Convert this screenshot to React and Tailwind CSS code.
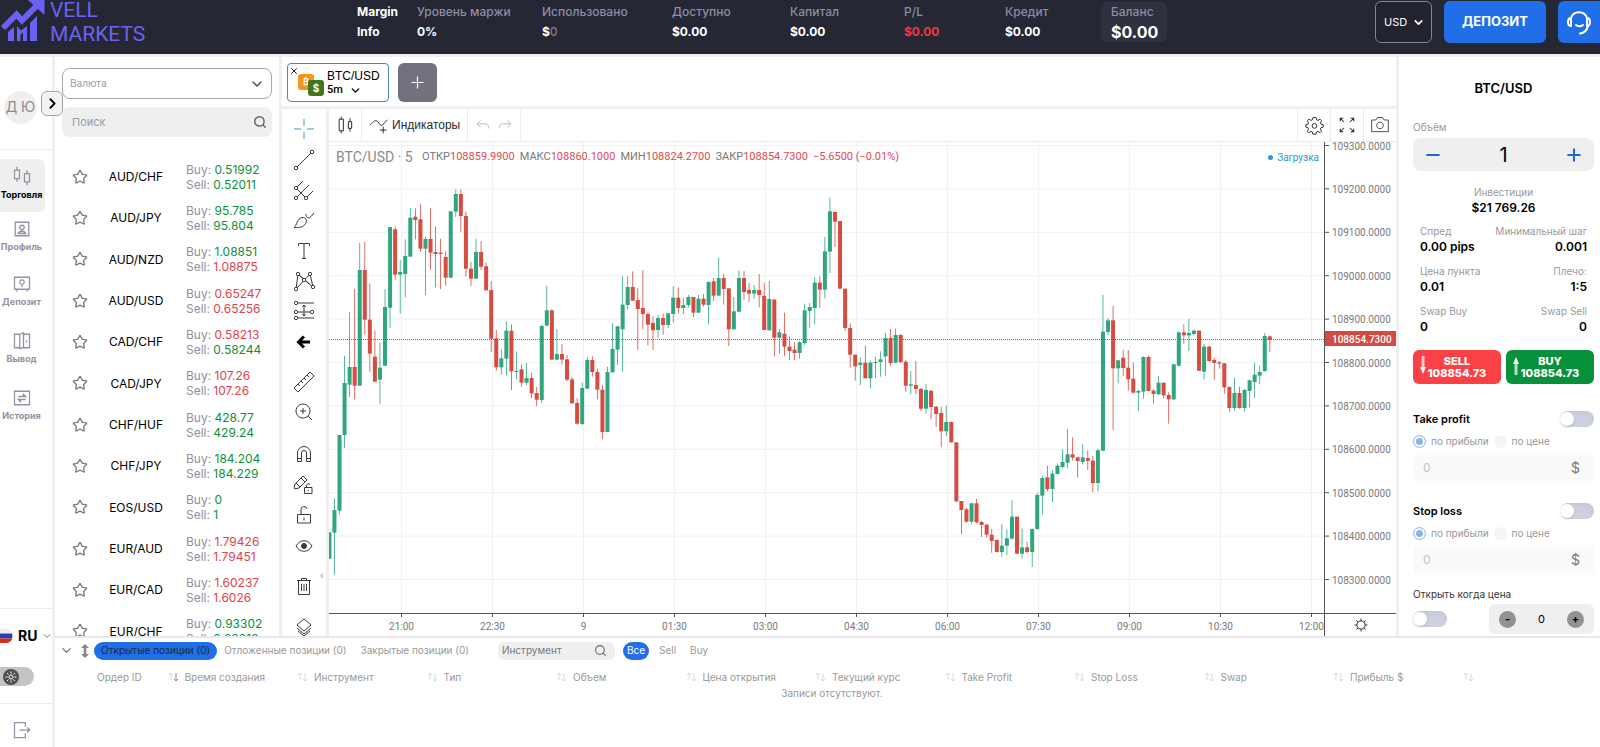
import React, { useState } from 'react';
import { ChevronDown, ChevronRight, Search, Star, Minus, Plus, X } from 'lucide-react';

const accountStats = [
  { label: 'Уровень маржи', value: '0%', width: 'w-[125px]' },
  { label: 'Использовано', value: '$', dim: '0', width: 'w-[130px]' },
  { label: 'Доступно', value: '$0.00', width: 'w-[118px]' },
  { label: 'Капитал', value: '$0.00', width: 'w-[114px]' },
  { label: 'P/L', value: '$0.00', width: 'w-[101px]', red: true },
  { label: 'Кредит', value: '$0.00', width: 'w-[96px]' },
];

const pairs = [
  { name: 'AUD/CHF', buy: '0.51992', sell: '0.52011', buyUp: true, sellUp: true },
  { name: 'AUD/JPY', buy: '95.785', sell: '95.804', buyUp: true, sellUp: true },
  { name: 'AUD/NZD', buy: '1.08851', sell: '1.08875', buyUp: true, sellUp: false },
  { name: 'AUD/USD', buy: '0.65247', sell: '0.65256', buyUp: false, sellUp: false },
  { name: 'CAD/CHF', buy: '0.58213', sell: '0.58244', buyUp: false, sellUp: true },
  { name: 'CAD/JPY', buy: '107.26', sell: '107.26', buyUp: false, sellUp: false },
  { name: 'CHF/HUF', buy: '428.77', sell: '429.24', buyUp: true, sellUp: true },
  { name: 'CHF/JPY', buy: '184.204', sell: '184.229', buyUp: true, sellUp: true },
  { name: 'EOS/USD', buy: '0', sell: '1', buyUp: true, sellUp: true },
  { name: 'EUR/AUD', buy: '1.79426', sell: '1.79451', buyUp: false, sellUp: false },
  { name: 'EUR/CAD', buy: '1.60237', sell: '1.6026', buyUp: false, sellUp: false },
  { name: 'EUR/CHF', buy: '0.93302', sell: '0.93313', buyUp: true, sellUp: true },
];

// direction, high, body top, body bottom, low (three ticks per pixel)
const candles = `
g 1057 1057 1136 1136|g 955 990 1058 1184|g 765 765 992 1004|g 527 609 765 804|g 396 561 614 651|r 327 561 617 658
g 189 270 617 617|r 186 270 419 463|r 310 419 521 575|r 451 530 605 605|g 487 563 599 673|g 327 381 557 557
g 141 141 383 443|r 139 148 284 299|g 239 276 284 401|g 178 228 282 352|g 83 113 230 230|r 85 110 120 178
r 72 118 206 215|g 171 177 206 345|r 85 177 218 269|r 140 216 222 322|r 176 218 222 327|r 214 231 293 317
g 94 94 293 293|g 28 42 95 111|r 28 42 108 155|r 94 108 266 290|r 246 266 296 318|g 177 216 296 296
r 183 216 260 270|r 248 259 331 331|r 303 330 476 516|r 450 475 562 572|g 508 535 562 584|g 424 452 536 587
r 433 452 574 630|g 514 573 576 598|r 553 568 608 620|g 549 594 608 616|r 578 594 640 655|r 621 639 659 678
g 434 438 660 670|g 318 391 437 437|r 388 391 539 539|g 447 522 539 539|r 492 522 539 554|r 525 538 599 604
r 591 598 670 670|r 655 669 731 734|g 607 624 732 735|g 532 540 626 626|r 529 540 576 590|r 567 576 629 658
r 616 629 756 777|g 560 576 756 756|g 430 507 577 577|g 439 439 509 555|g 289 374 448 575|g 289 321 375 388
r 274 321 362 362|r 325 360 387 510|r 271 384 402 448|r 397 402 434 496|r 409 429 451 510|g 405 414 450 473
r 400 414 435 464|g 400 400 435 444|g 318 353 402 428|r 322 353 384 400|g 353 375 384 402|g 345 351 375 382
r 351 351 398 411|g 345 356 398 398|r 342 356 374 380|g 305 306 375 433|r 294 304 347 363|g 234 294 347 347
r 283 294 327 374|r 325 325 448 498|g 351 394 448 448|g 271 294 395 397|r 273 294 336 360|r 309 330 341 366
g 315 330 341 357|r 282 330 345 382|r 308 348 450 450|g 303 357 451 451|r 357 359 473 530|g 447 457 473 521
r 398 461 500 528|r 469 500 513 540|r 486 509 519 541|g 484 487 519 536|g 371 391 489 495|g 369 381 393 443
g 291 308 384 433|r 289 308 329 384|g 171 214 329 356|g 52 94 215 279|r 94 96 125 201|r 123 123 326 326
r 326 326 444 453|r 430 444 524 563|r 524 524 559 602|g 533 548 555 615|r 497 548 595 595|g 542 548 595 626
g 530 546 549 594|g 514 538 546 590|g 459 474 529 587|r 447 474 549 558|g 445 465 548 550|r 462 465 546 550
r 540 545 617 635|g 573 613 617 644|r 543 615 627 643|r 623 627 686 693|g 611 630 686 701|r 632 632 681 718
r 679 680 702 741|r 680 699 754 802|g 677 726 754 769|r 724 726 787 788|r 786 787 964 967|r 963 963 990 1063
r 983 988 1025 1028|g 968 970 1025 1032|r 957 970 1027 1030|r 1023 1026 1035 1071|r 1033 1034 1064 1072|r 1046 1064 1083 1118
r 1078 1080 1116 1118|g 1033 1097 1116 1130|g 1048 1075 1097 1126|g 961 1010 1076 1078|r 1010 1010 1121 1122|g 1046 1102 1121 1136
r 1086 1102 1116 1119|g 1045 1047 1116 1161|g 938 945 1047 1049|g 888 894 947 1004|r 857 892 927 934|g 870 881 927 966
g 850 857 882 884|g 808 846 861 866|g 747 823 848 864|r 772 823 833 842|r 830 832 843 893|g 793 832 846 853
r 811 834 843 870|r 828 842 909 937|g 807 811 909 933|g 345 455 812 814|g 414 421 456 465|r 378 421 565 750
g 540 541 565 610|r 510 533 564 587|r 510 563 598 632|r 548 596 638 640|g 628 633 638 693|g 529 531 635 656
r 526 531 633 634|r 627 632 642 671|g 588 608 643 645|r 608 608 646 655|r 637 645 658 731|g 551 553 658 660
g 454 457 557 559|r 433 457 466 491|g 417 459 466 513|g 449 452 462 466|r 451 452 572 573|g 492 500 575 598
r 497 500 543 546|r 534 540 549 600|r 543 547 551 566|r 549 550 622 641|r 620 621 684 695|g 593 639 684 692
r 620 639 684 686|g 627 630 684 695|g 599 601 633 682|g 548 584 606 654|g 557 576 587 613|g 459 468 573 575
r 467 469 480 517`
  .trim()
  .split(/[|\n]/)
  .map((row) => {
    const [dir, ...ticks] = row.split(' ');
    const [high, top, bottom, low] = ticks.map((t) => Number(t) / 3 + 38);
    return { up: dir === 'g', high, top, bottom, low };
  });

const priceLabels = [109300, 109200, 109100, 109000, 108900, 108800, 108700, 108600, 108500, 108400, 108300];
const timeLabels = ['21:00', '22:30', '9', '01:30', '03:00', '04:30', '06:00', '07:30', '09:00', '10:30', '12:00'];
const priceY = (i) => 3.5 + i * 43.4;
const timeX = (i) => 72.5 + i * 91;

const orderColumns = [
  'Ордер ID', 'Время создания', 'Инструмент', 'Тип', 'Объем', 'Цена открытия',
  'Текущий курс', 'Take Profit', 'Stop Loss', 'Swap', 'Прибыль $',
];

function Glyph({ children, size = 24, className = '' }) {
  return (
    <svg width={size} height={size} viewBox="0 0 24 24" fill="none" stroke="currentColor" strokeWidth="1" className={className}>
      {children}
    </svg>
  );
}

function Logo() {
  return (
    <a href="#" className="flex w-[357px] shrink-0 items-start text-[#6a62f2]">
      <svg width="50" height="42" viewBox="0 0 50 42" className="shrink-0">
        <path d="M3 28 16.5 14.5l5.5 6L39 3.5" fill="none" stroke="currentColor" strokeWidth="6" />
        <path d="M28 0h16.500v15zM8 41v-9l6-5v14zM17 41V26l4 4.500L27 26v15h-4v-9l-2.500 3v6zM30 41V23l7-7v25z" fill="currentColor" />
      </svg>
      <span className="-mt-0.5 block font-[Roboto] text-[21px] leading-6">
        VELL
        <br />
        MARKETS
      </span>
    </a>
  );
}

function Header() {
  return (
    <header className="flex h-[57px] shrink-0 border-b-3 border-[#efeff2] bg-[#262734] text-xs text-white">
      <Logo />
      <div className="flex leading-5">
        <div className="w-[60px] pt-[2px] font-bold">
          Margin
          <br />
          Info
        </div>
        {accountStats.map((stat) => (
          <div key={stat.label} className={`pt-[2px] ${stat.width}`}>
            <div className="font-medium text-[#8d8ea6]">{stat.label}</div>
            <div className={stat.red ? 'font-bold text-[#ec3a41]' : 'font-bold'}>
              {stat.value}
              {stat.dim && <span className="font-medium text-[#7c7d8c]">{stat.dim}</span>}
            </div>
          </div>
        ))}
        <div className="mt-[2px] h-10 w-[66px] self-start rounded-md bg-[#30313e] pl-[10px]">
          <div className="font-medium text-[#8d8ea6]">Баланс</div>
          <div className="text-base leading-5 font-bold">$0.00</div>
        </div>
      </div>
      <div className="mt-px ml-auto flex h-[42px] gap-3">
        <div className="relative">
          <select aria-label="Валюта счёта" className="h-full w-[57px] appearance-none rounded-md border border-[#85868f] bg-[#22232f] pl-2 text-[11px]">
            <option>USD</option>
          </select>
          <ChevronDown size={13} strokeWidth={3} className="pointer-events-none absolute top-[15px] right-[7px]" />
        </div>
        <button className="w-[102px] rounded-md bg-[#206fe8] text-[13px] font-bold">ДЕПОЗИТ</button>
        <button aria-label="Поддержка" className="flex w-[42px] items-center justify-center rounded-l-md bg-[#206fe8]">
          <svg width="28" height="28" viewBox="0 0 28 28" fill="none" stroke="white" strokeWidth="2" strokeLinecap="round">
            <path d="M6 10a8.500 8.500 0 0 1 16 0M23 18c-1 4-4 7-8 7.500M11 17c2 1.500 5 1.500 7 0" />
            <path d="M6 10c-4 0-4 8 0 8zM22 10c4 0 4 8 0 8z" />
          </svg>
        </button>
      </div>
    </header>
  );
}

const navItems = [
  {
    label: 'Профиль',
    height: 'h-[53px]',
    icon: <path d="M3 3h18v18H3zM12 7a3 3 0 1 0 .010 0zM7 18c1-4 9-4 10 0z" />,
  },
  {
    label: 'Депозит',
    height: 'h-[57px]',
    icon: <path d="M2 3h20v16H2zM5 19v3M19 19v3M12 6.500a3 3 0 1 0 .010 0zM12 12.500V16" />,
  },
  {
    label: 'Вывод',
    height: 'h-[57px]',
    icon: <path d="M9 3H2v18h7M9 3l5-2v20l-5 1zM14 3h8v18h-8M18 11v3" />,
  },
  {
    label: 'История',
    height: 'h-[57px]',
    icon: <path d="M2 3h20v18H2zM7 10h10l-3-3v3M17 14H7l3 3v-3" />,
  },
];

function Sidebar() {
  return (
    <aside className="relative flex w-[55px] shrink-0 flex-col border-r-3 border-[#efeff1] text-[#9292a3]">
      <div className="flex h-[93px] items-center border-b border-[#ececec] pt-2 pl-1">
        <div className="flex h-[33px] w-[33px] items-center justify-center rounded-full bg-[#efefef] text-sm whitespace-nowrap text-[#8c8c8c]">
          Д Ю
        </div>
      </div>
      <button aria-label="Развернуть меню" className="absolute top-[34px] left-[41px] z-10 flex h-[25px] w-[22px] items-center justify-center rounded-md border border-[#a5a5a5] bg-[#f3f3f3] text-black">
        <ChevronRight size={17} strokeWidth={2.5} />
      </button>
      <nav className="mt-[9px] flex flex-col text-[9px] leading-3 font-bold">
        <a href="#" className="flex h-[53px] w-[45px] flex-col items-center justify-center gap-[3px] rounded-r-md bg-[#efefef] pr-[2px] pb-1">
          <Glyph size={20}>
            <path d="M6 1v4M6 15v4M3 5h6v10H3zM18 5v4M18 19v4M15 9h6v10h-6z" strokeWidth="1.500" />
          </Glyph>
          <span className="text-black">Торговля</span>
        </a>
        {navItems.map((item) => (
          <a href="#" key={item.label} className={`flex w-[43px] flex-col items-center justify-center gap-[3px] pb-1 ${item.height}`}>
            <svg width="18" height="18" viewBox="0 0 24 24" fill="none" stroke="currentColor" strokeWidth="1.700">
              {item.icon}
            </svg>
            {item.label}
          </a>
        ))}
      </nav>
      <div className="mt-auto flex h-[47px] items-center border-t border-[#ececec] pt-2">
        <svg width="13" height="14" viewBox="0 0 13 14" className="shrink-0">
          <path d="M0 0h8a7 7 0 0 1 4.300 4.500H0z" fill="#eeeeee" />
          <path d="M0 4.500h12.300v5H0z" fill="#2440b5" />
          <path d="M0 9.500h12.300A7 7 0 0 1 6 14H0z" fill="#d52b1e" />
        </svg>
        <button className="ml-[5px] flex items-center gap-1 text-sm font-bold text-black">
          RU
          <ChevronDown size={12} className="text-[#777]" />
        </button>
      </div>
      <div className="flex h-12 items-start pt-3">
        <label className="flex h-[19px] w-[34px] items-center rounded-r-full bg-[#c4c4c4] pl-[3px]">
          <input type="checkbox" aria-label="Светлая тема" className="sr-only" />
          <span className="flex h-4 w-4 items-center justify-center rounded-full bg-[#505050] text-white">
            <Glyph size={12}>
              <path d="M12 8a4 4 0 1 0 .010 0zM12 1v4M12 19v4M1 12h4M19 12h4M4 4l3 3M17 17l3 3M4 20l3-3M17 7l3-3" strokeWidth="2" />
            </Glyph>
          </span>
        </label>
      </div>
      <div className="flex h-11 items-center border-t border-[#ececec] pt-2 pl-3">
        <button aria-label="Выйти">
          <Glyph size={20}>
            <path d="M16 8V3H3v18h13v-5M9 12h12M18 9l3.500 3-3.500 3" strokeWidth="1.500" />
          </Glyph>
        </button>
      </div>
    </aside>
  );
}

function Watchlist() {
  return (
    <section className="flex w-[227px] shrink-0 flex-col overflow-hidden border-r-3 border-[#efeff1] px-[7px] pt-[11px]">
      <div className="relative shrink-0">
        <select aria-label="Валюта" className="h-[31px] w-[210px] appearance-none rounded-lg border border-[#a8a8a8] pl-[7px] text-[10px] text-[#9a9aac]">
          <option>Валюта</option>
        </select>
        <ChevronDown size={16} className="pointer-events-none absolute top-2 left-[187px] text-[#444]" />
      </div>
      <label className="mt-2 flex h-[30px] w-[210px] shrink-0 items-center rounded-lg bg-[#efefef] pr-[5px] pl-[10px]">
        <input placeholder="Поиск" className="min-w-0 flex-1 text-[11px] outline-none placeholder:text-[#9a9aac]" />
        <Search size={14} strokeWidth={2.5} className="text-[#666]" />
      </label>
      <ul className="mt-[19px] grid h-[496px] shrink-0 grid-rows-12">
        {pairs.map((pair) => (
          <li key={pair.name} className="flex items-center text-xs leading-[15px]">
            <button aria-label="В избранное" className="ml-[10px] text-[#7c7c7c]">
              <Star size={16} strokeWidth={2} />
            </button>
            <span className="ml-3 w-[72px] text-center text-black">{pair.name}</span>
            <span className="ml-[14px] whitespace-nowrap text-[#9090a2]">
              Buy: <span className={pair.buyUp ? 'text-[#0d9038]' : 'text-[#e04248]'}>{pair.buy}</span>
              <br />
              Sell: <span className={pair.sellUp ? 'text-[#0d9038]' : 'text-[#e04248]'}>{pair.sell}</span>
            </span>
          </li>
        ))}
      </ul>
    </section>
  );
}

function ChartTabs() {
  return (
    <div className="flex h-[52px] shrink-0 gap-[9px] border-b-3 border-[#efeff1] pt-[6px] pl-[5px]">
      <div className="relative flex h-[39px] w-[102px] rounded border border-[#4b86bb] pt-[5px] pl-[39px] text-black">
        <button aria-label="Закрыть" className="absolute top-[2px] left-[1px]">
          <X size={10} />
        </button>
        <span className="absolute top-[10px] left-[10px] flex h-4 w-4 items-center justify-center rounded-[3px] bg-[#f7941b] text-[9px] font-bold text-white">
          ₿
        </span>
        <span className="absolute top-4 left-5 flex h-4 w-4 items-center justify-center rounded-[3px] bg-[#43761f] text-[10px] font-bold text-white">
          $
        </span>
        <div>
          <div className="font-['Liberation_Sans'] text-xs leading-[14px]">BTC/USD</div>
          <button className="flex items-center gap-[6px] font-[Roboto] text-[11px] leading-[14px] font-medium">
            5m <ChevronDown size={13} strokeWidth={2.5} />
          </button>
        </div>
      </div>
      <button aria-label="Добавить график" className="flex h-[39px] w-[39px] items-center justify-center rounded-md bg-[#72727e] text-white">
        <Plus size={19} strokeWidth={1.5} />
      </button>
    </div>
  );
}

const dot = (x, y) => <circle key={`${x}-${y}`} cx={x} cy={y} r="1.700" fill="white" />;

const toolGroups = [
  {
    height: 'h-[243px] mt-[5px]',
    tools: [
      ['Перекрестие', <path d="M12 2v7M12 15v7M2 12h7M15 12h7" stroke="#3f9cc0" />],
      ['Линия тренда', <><path d="M4 20 20 4" />{dot(4, 20)}{dot(20, 4)}</>],
      ['Вилы', <><path d="M4 10l7-7M4 20l13-13M14 20l7-7M4 10l10 10" />{dot(4, 10)}{dot(4, 20)}{dot(14, 20)}</>],
      ['Кисть', <path d="M2 19.500c3-2 3-9 8-10 4-.500 5.500 3 3.500 6-2 4-6.500 4-11.500 4zM14 6c0 4 3 5 5 2.500L22 5" />],
      ['Текст', <path d="M6.500 7V4.500h11V7M12 4.500v15M10 19.500h4" />],
      ['Паттерн', <><path d="M4 20 6 5l11 10M4 20 18 5l3 13L6 5" />{dot(4, 20)}{dot(6, 5)}{dot(18, 5)}{dot(21, 18)}{dot(12, 11)}</>],
      ['Прогноз', <><path d="M5 4h17M4 13h16M5 19h17M12 6v11M10.500 8 12 6l1.500 2M10.500 15l1.500 2 1.500-2" />{dot(4, 4)}{dot(4, 13)}{dot(20, 13)}{dot(4, 19)}</>],
      ['Назад', <path d="M18 12H7M12 6.500 6.500 12l5.500 5.500" strokeWidth="3" stroke="black" />],
    ],
  },
  {
    height: 'h-[60px] mt-[10px]',
    tools: [
      ['Линейка', <path d="m2 18 16-16 4 4L6 22zM6 14l2 2M9 11l2 2M12 8l2 2M15 5l2 2" />],
      ['Увеличить', <path d="M11 4a7 7 0 1 0 .010 0zM16 16l4 4M11 8v6M8 11h6" />],
    ],
  },
  {
    height: 'h-[122px] mt-[12px]',
    tools: [
      ['Магнит', <path d="M5.500 19.500V11a6.500 6.500 0 0 1 13 0v8.500h-4V11a2.500 2.500 0 0 0-5 0v8.500zM5.500 16.500h4M14.500 16.500h4" />],
      ['Режим рисования', <path d="M2 15l1-4 8-8 4 4-8 8-4 1zM4 10l4 4M9 5l4 4M12.500 14.500h7.500v6h-7.500zM14.500 14.500v-2a2 2 0 0 1 3.500-1M16.500 17v1" />],
      ['Блокировка', <path d="M5.500 11.500h13v8.500h-13zM9 11.500V7a3 3 0 0 1 6-1M12 14.500v3" />],
      ['Скрыть', <><path d="M4 12c4-7 12-7 16 0-4 7-12 7-16 0z" /><circle cx="12" cy="12" r="2.500" fill="currentColor" /></>],
    ],
  },
  {
    height: 'h-[30px] mt-[11px]',
    tools: [['Удалить', <path d="M6.500 6v13.500h11V6M5 5.500h14M9.500 5V3.500h5V5M9.500 9v7M12 9v7M14.500 9v7" />]],
  },
  {
    height: 'h-[30px] mt-[10px]',
    tools: [['Слои', <path d="m12 4 7 6-7 6-7-6zM5 13l7 6 7-6M6 16l6 5 6-5" />]],
  },
];

function DrawingTools() {
  return (
    <div className="relative w-[47px] shrink-0 overflow-hidden border-r-3 border-[#efeff1] text-[#3a3a3a]">
      <div className="flex flex-col pr-px">
        {toolGroups.map((group) => (
          <div key={group.tools[0][0]} className={`flex flex-col items-center justify-around ${group.height}`}>
            {group.tools.map(([name, icon]) => (
              <button key={name} aria-label={name}>
                <Glyph>{icon}</Glyph>
              </button>
            ))}
          </div>
        ))}
      </div>
      <button aria-label="Скрыть панель" className="absolute top-[456px] right-0 h-5 w-2 text-[10px] leading-5 text-[#999]">
        ‹
      </button>
    </div>
  );
}

function ChartToolbar() {
  return (
    <div className="flex h-[33px] shrink-0 border-b border-[#ececee] text-[#2a2a2a]">
      <button aria-label="Тип графика" className="flex w-[33px] items-center justify-center border-r border-[#ececee]">
        <Glyph size={20}>
          <path d="M5 5h5v14H5zM7.500 2v3M7.500 19v3M16 8h4v8h-4zM18 4v4M18 16v4" strokeWidth="1.200" />
        </Glyph>
      </button>
      <button className="flex w-[106px] items-center gap-[3px] border-r border-[#ececee] pl-[7px] font-['Liberation_Sans'] text-xs">
        <Glyph size={20}>
          <path d="M1 12c3-2 5-6 8-5s4 7 7 5 3-4 6-6M17 14v8M13 18h8" strokeWidth="1.200" />
        </Glyph>
        Индикаторы
      </button>
      <div className="flex w-[53px] items-center justify-around border-r border-[#ececee] px-1 text-[#b5b5b5]">
        <button aria-label="Отменить">
          <Glyph size={14}><path d="M8 4 2 10l6 6M2 10h13c5 0 7 3 7 8" strokeWidth="1.500" /></Glyph>
        </button>
        <button aria-label="Повторить">
          <Glyph size={14}><path d="m16 4 6 6-6 6M22 10H9c-5 0-7 3-7 8" strokeWidth="1.500" /></Glyph>
        </button>
      </div>
      <div className="ml-auto flex">
        <button aria-label="Настройки" className="flex w-[33px] items-center justify-center border-l border-[#ececee]">
          <GearIcon size={19} />
        </button>
        <button aria-label="Полный экран" className="flex w-[33px] items-center justify-center border-l border-[#ececee]">
          <Glyph size={18}>
            <path d="M3 7V3h4M17 3h4v4M21 17v4h-4M7 21H3v-4M3 3l5 5M21 3l-5 5M21 21l-5-5M3 21l5-5" strokeWidth="1.400" />
          </Glyph>
        </button>
        <button aria-label="Снимок" className="flex w-[33px] items-center justify-center border-l border-[#ececee]">
          <Glyph size={20}>
            <path d="M2 6h5l2-3h6l2 3h5v14H2zM12 8.500a4 4 0 1 0 .010 0z" />
          </Glyph>
        </button>
      </div>
    </div>
  );
}

function GearIcon({ size }) {
  return (
    <Glyph size={size}>
      <path
        d="M10 2h4l.700 2.800 1.800.800L19 4l2 2-1.500 2.500.700 1.700L23 11v3l-2.800.800-.700 1.700L21 19l-2 2-2.500-1.500-1.800.700L14 23h-4l-.700-2.800-1.800-.700L5 21l-2-2 1.500-2.500-.700-1.700L1 14v-3l2.800-.800.700-1.700L3 6l2-2 2.500 1.600 1.800-.800z"
        strokeWidth="1.200"
      />
      <circle cx="12" cy="12.500" r="3" strokeWidth="1.200" />
    </Glyph>
  );
}

function Chart() {
  return (
    <div className="flex min-h-0 flex-1 font-[Roboto] text-[10px]">
      <div className="flex min-w-0 flex-1 flex-col">
        <div className="relative min-h-0 flex-1">
          <svg className="absolute inset-0 h-full w-full">
            {priceLabels.map((p, i) => (
              <line key={p} x1="0" x2="100%" y1={priceY(i)} y2={priceY(i)} stroke="#f0f1f1" />
            ))}
            {timeLabels.map((t, i) => (
              <line key={t} x1={timeX(i)} x2={timeX(i)} y1="0" y2="100%" stroke="#f0f1f1" />
            ))}
            {candles.map((c, i) => {
              const x = 0.4 + i * 5.056;
              return (
                <g key={i} fill={c.up ? '#2fa680' : '#d54c40'}>
                  <rect x={x - 0.4} y={c.high} width="0.8" height={c.low - c.high} />
                  <rect x={x - 2} y={c.top} width="4" height={c.bottom - c.top} />
                </g>
              );
            })}
            <line x1="0" x2="100%" y1="197.5" y2="197.5" stroke="#c9473f" strokeDasharray="1 1" />
          </svg>
          <div className="absolute top-[5px] right-[5px] left-[7px] flex items-center text-[11px] whitespace-nowrap text-[#e04b50]">
            <span className="w-[86px] text-sm text-[#8a8a8a]">BTC/USD · 5</span>
            <span className="mr-[5px]"><span className="text-[#777]">ОТКР</span>108859.9900</span>
            <span className="mr-[5px]"><span className="text-[#777]">МАКС</span>108860.1000</span>
            <span className="mr-[5px]"><span className="text-[#777]">МИН</span>108824.2700</span>
            <span className="mr-[5px]"><span className="text-[#777]">ЗАКР</span>108854.7300</span>
            <span>−5.6500 (−0.01%)</span>
            <span className="ml-auto flex items-center gap-1 text-[10px] text-[#2f96d8]">
              <span className="h-[5px] w-[5px] rounded-full bg-[#2f96d8]" />
              Загрузка
            </span>
          </div>
        </div>
        <svg className="h-[23px] w-full shrink-0 border-t border-[#555]">
          {timeLabels.map((t, i) => (
            <g key={t}>
              <line x1={timeX(i)} x2={timeX(i)} y1="0" y2="3" stroke="#555" />
              <text x={timeX(i)} y="16" textAnchor="middle" fill="#7a7a7a">{t}</text>
            </g>
          ))}
        </svg>
      </div>
      <div className="flex w-[72px] shrink-0 flex-col border-l border-[#555]">
        <svg className="min-h-0 w-full flex-1">
          {priceLabels.map((p, i) => (
            <g key={p}>
              <line x1="0" x2="4" y1={priceY(i)} y2={priceY(i)} stroke="#555" />
              <text x="7" y={priceY(i) + 4} fill="#7a7a7a">{p}.0000</text>
            </g>
          ))}
          <rect x="0" y="189" width="100%" height="15" fill="#d34b40" />
          <text x="7" y="201" fill="white" fontWeight="500">108854.7300</text>
        </svg>
        <button aria-label="Настройки шкалы" className="flex h-[23px] items-center justify-center border-t border-[#555] text-[#333]">
          <Glyph size={14}>
            <path d="M12 5a7 7 0 1 0 .010 0zM12 1v4M12 19v4M1 12h4M19 12h4M4 4l3 3M17 17l3 3M4 20l3-3M17 7l3-3" strokeWidth="1.700" />
          </Glyph>
        </button>
      </div>
    </div>
  );
}

function Toggle({ label }) {
  const [on, setOn] = useState(false);
  return (
    <label className={`flex h-4 w-[34px] items-center rounded-full inset-shadow-sm ${on ? 'justify-end bg-[#206fe8]' : 'bg-[#cdd0df]'}`}>
      <input type="checkbox" aria-label={label} checked={on} onChange={() => setOn(!on)} className="sr-only" />
      <span className="h-[14px] w-[14px] rounded-full bg-white shadow" />
    </label>
  );
}

function LimitBlock({ title, name }) {
  return (
    <div>
      <div className="flex h-4 items-center justify-between text-[11px] font-semibold text-black">
        {title}
        <Toggle label={title} />
      </div>
      <div className="mt-[5px] flex h-[18px] items-center text-[10px] text-[#999]">
        <label className="flex items-center gap-[5px]">
          <input
            type="radio"
            name={name}
            defaultChecked
            className="h-[13px] w-[13px] appearance-none rounded-full border border-[#9dbdf0] bg-[#8fb2ee] ring-2 ring-white ring-inset"
          />
          по прибыли
        </label>
        <label className="ml-[5px] flex items-center gap-[5px]">
          <input type="radio" name={name} className="h-[13px] w-[13px] appearance-none rounded-full bg-[#f5f5f5]" />
          по цене
        </label>
      </div>
      <div className="mt-[3px] flex h-[30px] items-center rounded-md bg-[#fafafa] pr-[14px] pl-[10px]">
        <input aria-label={title} placeholder="0" className="min-w-0 flex-1 text-xs outline-none placeholder:text-[#c4c4c4]" />
        <span className="text-sm text-[#777]">$</span>
      </div>
    </div>
  );
}

const details = [
  ['Спред', '0.00 pips', 'Минимальный шаг', '0.001'],
  ['Цена пункта', '0.01', 'Плечо:', '1:5'],
  ['Swap Buy', '0', 'Swap Sell', '0'],
];

function OrderPanel() {
  return (
    <aside className="w-[204px] shrink-0 overflow-hidden border-l-3 border-[#efeff1] pr-[6px] pl-[14px] text-[10px]">
      <h2 className="mt-[22px] text-center text-[13px] leading-[18px] font-semibold text-black">BTC/USD</h2>
      <div className="mt-[22px] leading-4 text-[#999]">Объём</div>
      <div className="mt-[3px] flex h-[33px] items-center justify-between rounded-lg bg-[#efefef] px-[10px] text-[#1d6ad2]">
        <button aria-label="Уменьшить"><Minus size={20} strokeWidth={2.5} /></button>
        <input aria-label="Объём" defaultValue="1" className="w-16 text-center text-xl text-black outline-none" />
        <button aria-label="Увеличить объём"><Plus size={20} strokeWidth={2.5} /></button>
      </div>
      <div className="mt-[14px] text-center leading-[15px] text-[#999]">
        Инвестиции
        <div className="text-xs leading-[15px] font-semibold text-black">$21 769.26</div>
      </div>
      <div className="mt-[9px] flex flex-col gap-[10px] px-[7px] leading-[15px] text-[#999]">
        {details.map(([left, leftValue, right, rightValue]) => (
          <div key={left} className="flex justify-between whitespace-nowrap">
            <div>
              {left}
              <div className="text-xs leading-[15px] font-semibold text-black">{leftValue}</div>
            </div>
            <div className="text-right">
              {right}
              <div className="text-xs leading-[15px] font-semibold text-black">{rightValue}</div>
            </div>
          </div>
        ))}
      </div>
      <div className="mt-4 flex gap-[5px] text-[11px] leading-3 font-extrabold text-white">
        <button className="relative h-[34px] flex-1 rounded-md bg-[#fc4146]">
          <svg width="6" height="18" viewBox="0 0 6 18" className="absolute top-[6px] left-[7px]" fill="white">
            <path d="M1.500 0h3v12h-3z" opacity=".7" />
            <path d="M0 11h6l-3 7z" />
          </svg>
          SELL
          <div>108854.73</div>
        </button>
        <button className="relative h-[34px] flex-1 rounded-md bg-[#07913a]">
          <svg width="6" height="18" viewBox="0 0 6 18" className="absolute top-[7px] left-[7px]" fill="white">
            <path d="M1.500 6h3v12h-3z" opacity=".7" />
            <path d="M0 7h6L3 0z" />
          </svg>
          BUY
          <div>108854.73</div>
        </button>
      </div>
      <div className="mt-[27px] flex flex-col gap-5">
        <LimitBlock title="Take profit" name="tp" />
        <LimitBlock title="Stop loss" name="sl" />
      </div>
      <div className="mt-[11px] leading-4 text-[#333]">Открыть когда цена</div>
      <div className="mt-[2px] flex items-center justify-between">
        <Toggle label="Открыть когда цена" />
        <div className="flex h-[30px] w-[105px] items-center justify-between rounded-md bg-[#efefef] px-[10px] text-black">
          <button aria-label="Цена ниже" className="h-[17px] w-[17px] rounded-full bg-[#929292] text-[11px] leading-4 font-bold">-</button>
          <input aria-label="Цена" defaultValue="0" className="w-8 text-center text-[11px] outline-none" />
          <button aria-label="Цена выше" className="h-[17px] w-[17px] rounded-full bg-[#929292] text-[11px] leading-4 font-bold">+</button>
        </div>
      </div>
    </aside>
  );
}

function SortIcon({ active }) {
  return (
    <svg width="11" height="10" viewBox="0 0 11 10" fill="none" stroke="#d9d9d9" className="shrink-0">
      <path d="M3 8V1L1 3M3 1l2 2" />
      <path d="M8 1v8L6 7M8 9l2-2" stroke={active ? '#888' : '#d9d9d9'} />
    </svg>
  );
}

function Positions() {
  return (
    <section className="h-[109px] min-w-0 overflow-hidden text-[10px] text-[#999]">
      <div className="flex h-[25px] items-center pl-1">
        <button aria-label="Свернуть"><ChevronDown size={15} className="text-[#777]" /></button>
        <svg width="8" height="14" viewBox="0 0 8 14" fill="#888" className="ml-[7px]">
          <path d="M4 0l4 4H5.300v6H8l-4 4-4-4h2.700V4H0z" />
        </svg>
        <button className="ml-[5px] h-[18px] rounded-full bg-[#206fe8] px-[7px] whitespace-nowrap text-[#1c2740]">Открытые позиции (0)</button>
        <button className="ml-[7px] whitespace-nowrap">Отложенные позиции (0)</button>
        <button className="ml-[14px] whitespace-nowrap">Закрытые позиции (0)</button>
        <label className="ml-[29px] flex h-[18px] w-[117px] items-center rounded-md bg-[#efefef] pr-2 pl-1 text-[#666]">
          <input placeholder="Инструмент" className="min-w-0 flex-1 outline-none placeholder:text-[#777]" />
          <Search size={13} />
        </label>
        <button className="ml-2 h-[18px] rounded-full bg-[#206fe8] px-1 text-white">Все</button>
        <button className="ml-[10px]">Sell</button>
        <button className="ml-[14px]">Buy</button>
      </div>
      <table className="mt-[6px] w-full min-w-[1554px] table-fixed">
        <thead>
          <tr>
            {orderColumns.map((column, i) => (
              <th key={column} className="h-4 p-0 font-normal">
                <div className={`flex items-center justify-between pr-[6px] leading-4 whitespace-nowrap ${i === 0 ? 'pl-[42px]' : ''}`}>
                  {column}
                  <SortIcon active={i === 0} />
                </div>
              </th>
            ))}
            <th />
          </tr>
        </thead>
        <tbody>
          <tr>
            <td colSpan={12} className="p-0 text-center leading-4">Записи отсутствуют.</td>
          </tr>
        </tbody>
      </table>
    </section>
  );
}

function App() {
  return (
    <div className="flex h-screen flex-col overflow-hidden bg-white font-[Inter]">
      <Header />
      <div className="flex min-h-0 flex-1">
        <Sidebar />
        <div className="flex min-w-0 flex-1 flex-col">
          <div className="flex min-h-0 flex-1 border-b-2 border-[#e9e9eb]">
            <Watchlist />
            <main className="flex min-w-0 flex-1 flex-col">
              <ChartTabs />
              <div className="flex min-h-0 flex-1">
                <DrawingTools />
                <div className="flex min-w-0 flex-1 flex-col">
                  <ChartToolbar />
                  <Chart />
                </div>
              </div>
            </main>
            <OrderPanel />
          </div>
          <Positions />
        </div>
      </div>
    </div>
  );
}

export default App;
